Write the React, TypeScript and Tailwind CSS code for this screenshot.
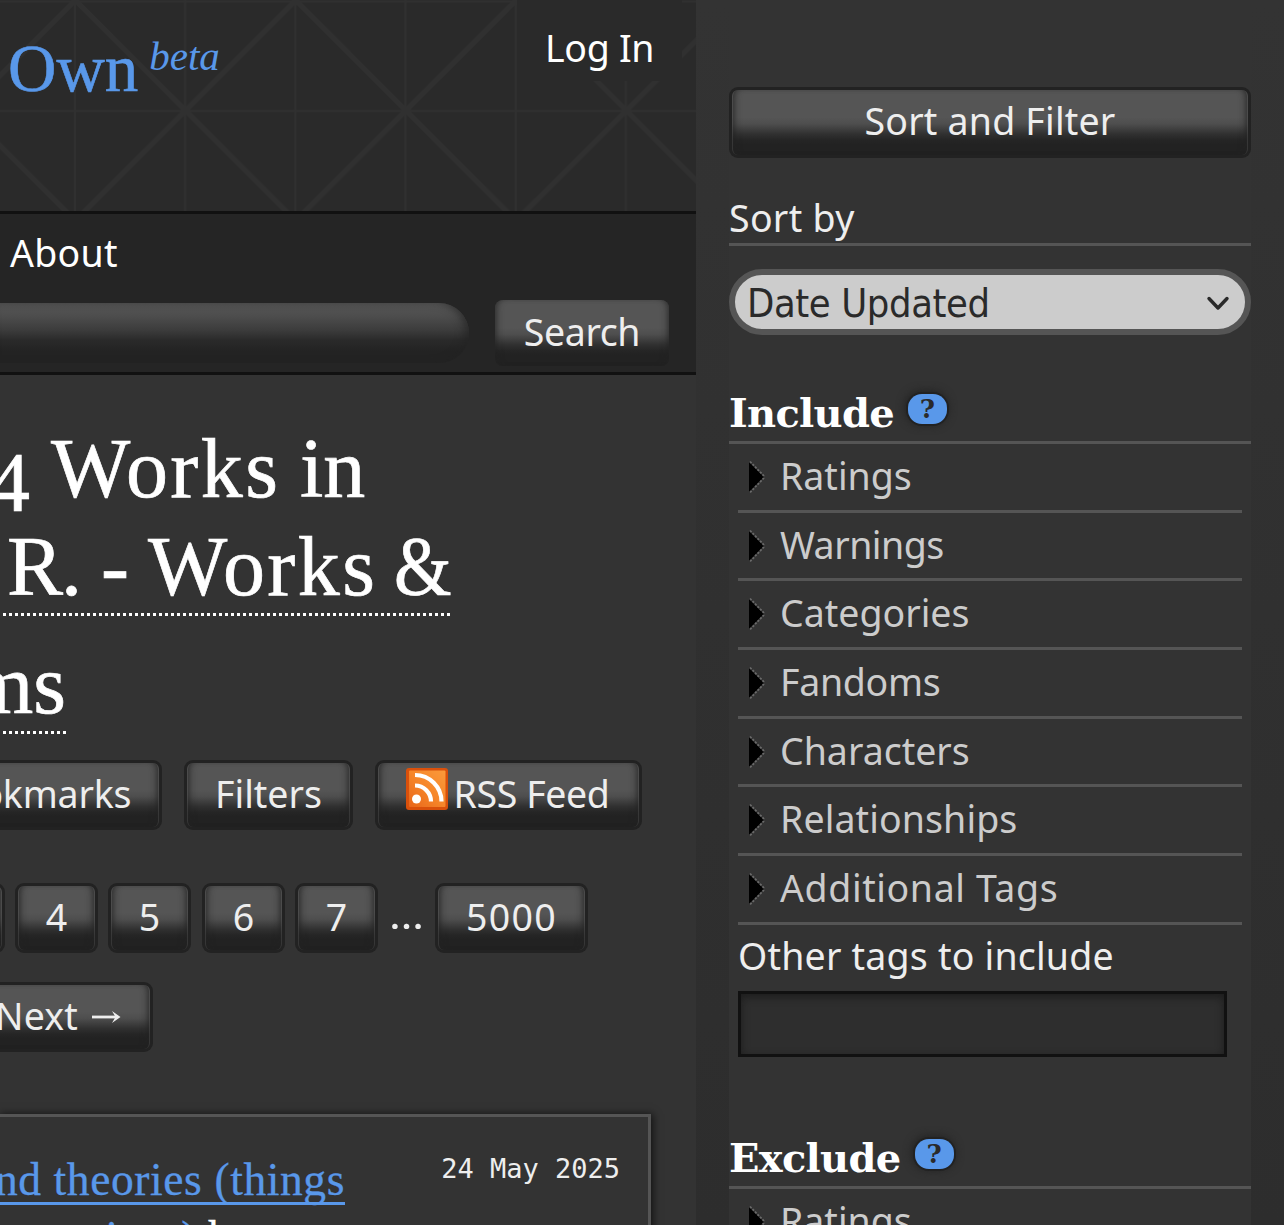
import React from 'react';

const SANS = "font-['Noto_Sans',sans-serif]";
const SERIF = "font-['Liberation_Serif',serif]";

const GLOSS =
  'bg-[linear-gradient(#555_0%,#555_42%,#4e4e4e_52%,#303030_68%,#252525_77%,#222_84%,#222_100%)] shadow-[inset_6px_0_7px_-5px_rgba(34,34,34,0.9),inset_-6px_0_7px_-5px_rgba(34,34,34,0.9)]';

function Button({ children, className = '' }: { children: React.ReactNode; className?: string }) {
  return (
    <button
      className={`flex h-[70px] shrink-0 justify-center rounded-[9px] bg-[#222] p-[3px] leading-[61px] text-[#eee] ${className}`}
    >
      <span className={`flex h-full w-full justify-center rounded-[6px] border-x border-[#444]/60 ${GLOSS}`}>{children}</span>
    </button>
  );
}

function HeaderPattern() {
  return (
    <svg className="absolute inset-0" width="696" height="211">
      <defs>
        <pattern id="lattice" x="75" y="0" width="220.4" height="220.4" patternUnits="userSpaceOnUse">
          <g stroke="#303030" fill="none">
            <path d="M-4-4 225 225M225-4-4 225" strokeWidth="5" />
            <path d="M0 0V221M110 0V221M220.4 0V221M0 1.5H221M0 111H221" strokeWidth="2" />
          </g>
        </pattern>
      </defs>
      <rect width="696" height="211" fill="url(#lattice)" />
    </svg>
  );
}

function RssIcon() {
  return (
    <svg width="42" height="42" viewBox="0 0 42 42" className="mt-[5px] mr-[6px] ml-[-2px] shrink-0">
      <defs>
        <linearGradient id="rss" x1="1" y1="0" x2="0" y2="1">
          <stop offset="0" stopColor="#fb9a3a" />
          <stop offset="0.5" stopColor="#f6862a" />
          <stop offset="1" stopColor="#e8661a" />
        </linearGradient>
        <filter id="soft">
          <feGaussianBlur stdDeviation="0.7" />
        </filter>
      </defs>
      <rect width="42" height="42" rx="3" fill="#d9500b" />
      <rect x="3" y="2.5" width="36.5" height="36.5" rx="1" fill="url(#rss)" filter="url(#soft)" />
      <g filter="url(#soft)">
        <circle cx="10.5" cy="31" r="4.5" fill="#fff" />
        <path d="M9 17.5a16 16 0 0 1 16 16M9 7a26.5 26.5 0 0 1 26.5 26.5" fill="none" stroke="#fff" strokeWidth="4.2" />
      </g>
    </svg>
  );
}

function Help() {
  return (
    <span className="flex h-[30px] w-[39px] items-center justify-center rounded-[14px] bg-[#5998ea] font-['DejaVu_Serif',serif] text-[26px] leading-[30px] font-bold text-[#2a2a2a] shadow-[0_0_0_2px_#222,-1px_-1px_8px_2px_#222]">
      ?
    </span>
  );
}

function SectionTitle({ label, className = '' }: { label: string; className?: string }) {
  return (
    <h4
      className={`flex h-[61px] items-start border-b-[3px] border-[#555] font-['DejaVu_Serif',serif] text-[40px] leading-[60px] font-bold tracking-[-0.7px] text-white ${className}`}
    >
      {label}
      <span className="mt-[11px] ml-[14px] tracking-normal">
        <Help />
      </span>
    </h4>
  );
}

function Row({ label, tracking = '' }: { label: string; tracking?: string }) {
  return (
    <div className="mx-[9px] flex h-[68.7px] border-b-[3px] border-[#555] leading-[63px] text-[#ccc]">
      <svg width="18" height="34" viewBox="0 0 18 34" className="mt-[16px] mr-[14px] ml-[10px] shrink-0">
        <path d="M1 2 16 17 1 32Z" fill="#000" />
        <path d="M2 1.5 15.5 15.5V18.5L2 32.5" fill="none" stroke="#6a6a6a" strokeWidth="1.8" strokeDasharray="2.2 1.4" />
      </svg>
      <span className={tracking}>{label}</span>
    </div>
  );
}

export default function App() {
  return (
    <div className={`flex h-[1225px] w-[1284px] overflow-hidden bg-[#333] text-[37.5px] whitespace-nowrap ${SANS}`}>
      <main className="flex w-[696px] shrink-0 flex-col overflow-hidden">
        <header className="relative h-[211px] shrink-0 bg-[#2a2a2a]">
          <HeaderPattern />
          <div className="relative flex h-full items-start justify-between">
            <a className={`flex items-start pl-[8px] text-[#5998ea] ${SERIF}`}>
              <span className="text-[67px] leading-[137px] [-webkit-text-stroke:0.6px]">Own</span>
              <sup className="top-0 ml-[11px] text-[41px] leading-[112px] italic">beta</sup>
            </a>
            <a className="mr-[14px] h-[81px] w-[165px] bg-[#2a2a2a] pl-[28px] leading-[95px] tracking-[-0.3px] text-white">
              Log In
            </a>
          </div>
        </header>
        <nav className="h-[164px] shrink-0 border-y-[3px] border-[#111] bg-[#252525]">
          <a className="block h-[75px] pl-[10px] leading-[77px] tracking-[0.3px] text-white">About</a>
          <div className="mt-[11px] flex">
            <div className="mt-[3px] h-[60px] w-[469px] rounded-r-[30px] bg-[linear-gradient(#555_0%,#4d4d4d_22%,#3c3c3c_45%,#2a2a2a_62%,#232323_80%,#232323_100%)] shadow-[inset_-6px_0_8px_-2px_rgba(34,34,34,0.7)]" />
            <button className={`ml-[26px] flex h-[66px] w-[174px] justify-center rounded-[8px] leading-[63px] tracking-[-0.4px] text-[#eee] ${GLOSS}`}>
              Search
            </button>
          </div>
        </nav>

        <h2 className={`mt-[45px] text-[84px] leading-[98px] text-white [-webkit-text-stroke:0.7px] ${SERIF}`}>
          <div className="flex h-[98px]">
            <span className="relative top-[14px] ml-[-12px] w-[63px]">4</span>
            <span className="w-[249px] tracking-[2.4px]">Works</span>
            <span>in</span>
          </div>
          <div className="flex h-[98px]">
            <div className="ml-[3px] flex h-[98px] w-[447px] border-b-[3px] border-dotted border-white">
              <span className="w-[98px] shrink-0 pl-[4px] tracking-[-2px]">R.</span>
              <span className="w-[47px] shrink-0">-</span>
              <span className="w-[246px] shrink-0 tracking-[2.4px]">Works</span>
              <span className="inline-block origin-left scale-x-[0.88]">&amp;</span>
            </div>
          </div>
          <div className="h-[118px] pt-[20px]">
            <div className="ml-[3px] flex h-[98px] w-[63px] justify-end border-b-[3px] border-dotted border-white">ms</div>
          </div>
        </h2>

        <div className="mt-[26px] ml-[-97px] flex shrink-0">
          <Button className="w-[259px]">
            <span className="tracking-[-0.2px]">Bookmarks</span>
          </Button>
          <Button className="ml-[22px] w-[169px]">Filters</Button>
          <Button className="ml-[22px] w-[267px] tracking-[-0.4px]">
            <RssIcon />
            RSS Feed
          </Button>
        </div>

        <div className="mt-[53px] ml-[-78px] flex shrink-0">
          <Button className="mr-[10px] w-[83px]">3</Button>
          <Button className="mr-[10px] w-[83px]">4</Button>
          <Button className="mr-[11px] w-[83px]">5</Button>
          <Button className="mr-[10px] w-[83px]">6</Button>
          <Button className="w-[83px]">7</Button>
          <span className="w-[57px] scale-x-[1.18] text-center leading-[64px] text-[#eee]">…</span>
          <Button className="w-[153px] tracking-[1.3px]">5000</Button>
        </div>

        <div className="mt-[29px] ml-[-37px] flex shrink-0">
          <Button className="w-[190px]">
            <span className="tracking-[0.2px]">Next</span>
            <svg width="29" height="16" viewBox="0 0 29 16" className="mt-[24px] ml-[14px]">
              <path d="M0 8H26" fill="none" stroke="#eee" strokeWidth="2.8" />
              <path d="M20 2 28.500 8 20 14 23.500 8Z" fill="#eee" />
            </svg>
          </Button>
        </div>

        <article className="mt-[62px] flex h-[300px] w-[651px] shrink-0 justify-between border-t-[3px] border-r-[3px] border-[#555] shadow-[1px_1px_8px_1px_rgba(0,0,0,0.65)]">
          <div className={`w-[345px] pt-[30px] text-[45.5px] leading-[65px] text-[#5998ea] [-webkit-text-stroke:0.3px] ${SERIF}`}>
            <div className="flex h-[58px] justify-end border-b-[3px] border-[#5998ea]">
              <span className="tracking-[0.6px]">nd theories (things</span>
            </div>
            <div className="ml-[-56px] flex w-[310px] justify-end">
              <span>conversations)</span>
              <span className="ml-[12px] text-white">by</span>
            </div>
          </div>
          <p className="mr-[28px] font-['DejaVu_Sans_Mono',monospace] text-[27px] leading-[103px] text-[#eee]">24 May 2025</p>
        </article>
      </main>

      <aside className="h-full w-[588px] shrink-0 bg-[linear-gradient(#333,#2d2d2d)] px-[33px]">
        <form className="h-full w-[522px] bg-[#333] pt-[87px]">
          <Button className="h-[71px] w-full tracking-[0.2px]">Sort and Filter</Button>
          <div className="mt-[33px] h-[55px] border-b-[3px] border-[#555] leading-[53px] tracking-[0.3px] text-[#eee]">Sort by</div>
          <div className="mt-[23px] flex h-[66px] justify-between rounded-full border-[6px] border-[#555] bg-[#ccc] pl-[12px] font-['DejaVu_Sans_Condensed','DejaVu_Sans',sans-serif] text-[39.5px] leading-[57px] tracking-[-0.4px] text-[#2a2a2a]">
            Date Updated
            <svg width="24" height="16" viewBox="0 0 24 16" className="mt-[20px] mr-[15px]">
              <path d="M3 3.5 12 13 21 3.5" fill="none" stroke="#2a2a2a" strokeWidth="3.4" strokeLinecap="round" strokeLinejoin="round" />
            </svg>
          </div>

          <SectionTitle label="Include" className="mt-[48px]" />
          <Row label="Ratings" />
          <Row label="Warnings" tracking="tracking-[-0.5px]" />
          <Row label="Categories" />
          <Row label="Fandoms" tracking="tracking-[-0.3px]" />
          <Row label="Characters" />
          <Row label="Relationships" tracking="tracking-[0.1px]" />
          <Row label="Additional Tags" tracking="tracking-[0.6px]" />
          <label className="ml-[9px] block h-[61px] leading-[62px] tracking-[0.2px] text-[#eee]">Other tags to include</label>
          <div className="mt-[5px] ml-[9px] h-[66px] w-[489px] border-[3px] border-[#111] bg-[#2e2e2e] shadow-[inset_0_3px_8px_rgba(17,17,17,0.6)]" />
          <SectionTitle label="Exclude" className="mt-[71px]" />
          <Row label="Ratings" />
        </form>
      </aside>
    </div>
  );
}
